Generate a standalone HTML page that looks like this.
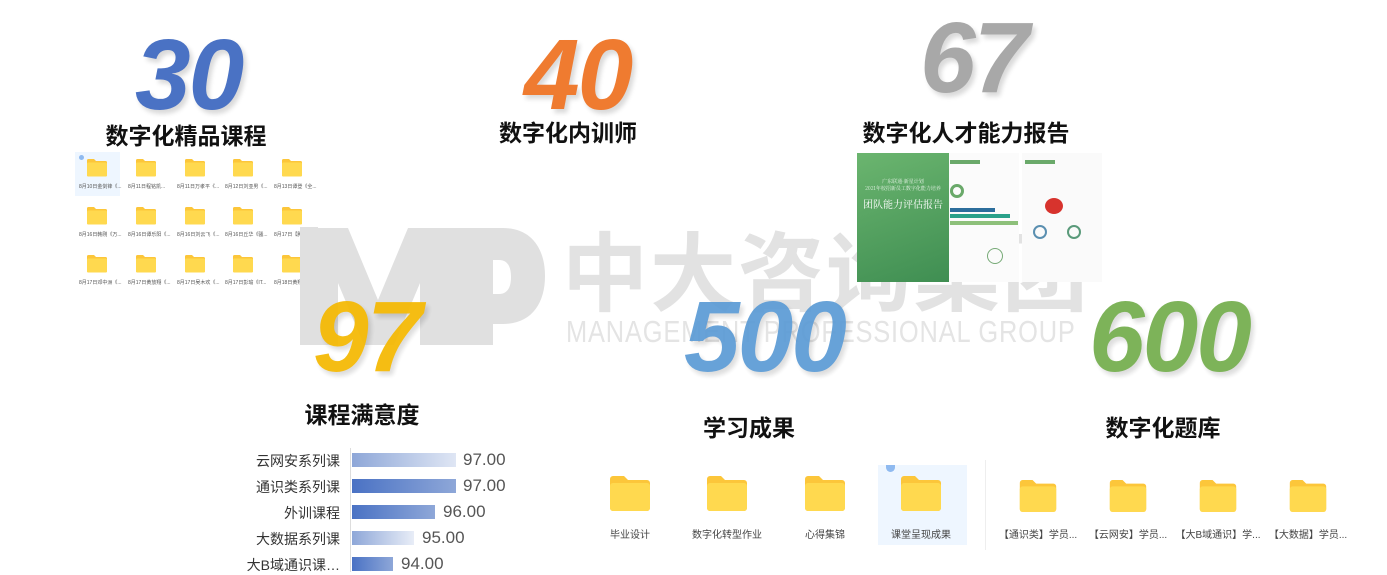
<!DOCTYPE html>
<html><head><meta charset="utf-8"><style>
*{margin:0;padding:0;box-sizing:border-box}
body{width:1387px;height:572px;overflow:hidden;background:#fff;position:relative;font-family:"Liberation Sans","Noto Sans CJK SC",sans-serif}
.a{position:absolute}
.num{position:absolute;font-style:italic;font-weight:bold;font-size:100px;line-height:1;letter-spacing:-2px;text-shadow:3px 4px 5px rgba(0,0,0,.15)}
.t{position:absolute;font-weight:bold;font-size:23px;color:#111;transform:translateX(-50%);white-space:nowrap}
.wm{position:absolute;color:#e2e2e2;white-space:nowrap}
.fs{position:absolute}
.lbl{position:absolute;font-size:10px;color:#444;transform:translateX(-50%);white-space:nowrap}
.tl{position:absolute;font-size:5px;color:#555;white-space:nowrap}
.cl{position:absolute;right:1047px;font-size:14px;color:#333;white-space:nowrap}
.bar{position:absolute;left:352px;height:14px}
.v{position:absolute;font-size:17px;color:#555}
</style></head><body>
<svg width="0" height="0" style="position:absolute"><defs><symbol id="f" viewBox="0 0 44 36"><path d="M2 4a3 3 0 0 1 3-3h11l4 4h19a3 3 0 0 1 3 3v25a3 3 0 0 1-3 3H5a3 3 0 0 1-3-3z" fill="#fcc63a"/><path d="M2 11a3 3 0 0 1 3-3h34a3 3 0 0 1 3 3v22a3 3 0 0 1-3 3H5a3 3 0 0 1-3-3z" fill="#ffd94f"/></symbol></defs></svg>

<!-- watermark -->
<svg class="a" style="left:0;top:0" width="1387" height="572">
<path d="M300 345V228h48l30 72 30-72h50v117h-38v-62l-26 62h-30l-26-62v62z" fill="#e0e0e0"/>
<path d="M455 345V228h48c28 0 42 20 42 48s-14 48-42 48h-10v21z" fill="#e0e0e0"/>
<path d="M493 260v34h6c8 0 12-6 12-17s-4-17-12-17z" fill="#fff"/>
</svg>
<div class="wm" style="left:562px;top:204px;font-size:86px;font-weight:bold;letter-spacing:2px">中大咨询集团</div>
<div class="wm" style="left:566px;top:314px;font-size:31px;letter-spacing:1px;color:#e4e4e4;transform:scaleX(.82);transform-origin:left">MANAGEMENT PROFESSIONAL GROUP</div>

<!-- numbers -->
<div class="num" style="left:135px;top:25px;color:#4a72c4">30</div>
<div class="num" style="left:524px;top:25px;color:#ef7b30">40</div>
<div class="num" style="left:920px;top:8px;color:#a8a8a8">67</div>
<div class="num" style="left:313px;top:287px;color:#f5b800;opacity:.92">97</div>
<div class="num" style="left:684px;top:287px;color:#5b9bd5;opacity:.92">500</div>
<div class="num" style="left:1089px;top:287px;color:#73ad4b;opacity:.92">600</div>

<div class="t" style="left:186px;top:117px">数字化精品课程</div>
<div class="t" style="left:568px;top:114px">数字化内训师</div>
<div class="t" style="left:966px;top:114px">数字化人才能力报告</div>
<div class="t" style="left:362px;top:396px">课程满意度</div>
<div class="t" style="left:749px;top:409px">学习成果</div>
<div class="t" style="left:1163px;top:409px">数字化题库</div>

<!-- folder grid -->
<div class="a" style="left:75px;top:152px;width:45px;height:44px;background:#eef6ff"></div>
<div class="a" style="left:79px;top:155px;width:5px;height:5px;border-radius:50%;background:#8fbaf0"></div>
<div id="grid"></div>
<div class="a" style="left:300px;top:227px;width:18px;height:68px;background:#e0e0e0"></div>

<!-- report -->
<div class="a" style="left:857px;top:153px;width:92px;height:129px;background:linear-gradient(160deg,#6bb56f,#3f8e52)"></div>
<div class="a" style="left:863px;top:178px;width:80px;font-size:5px;color:#e8f5e8;text-align:center;font-family:'Noto Serif CJK SC',serif">广东联通·新星计划<br>2021年校招新员工数字化能力培养</div>
<div class="a" style="left:861px;top:196px;width:84px;font-size:10px;color:#fff;text-align:center;font-family:'Noto Serif CJK SC',serif">团队能力评估报告</div>
<div class="a" style="left:949px;top:153px;width:70px;height:129px;background:#fbfbfb"></div>
<div class="a" style="left:950px;top:160px;width:30px;height:4px;background:#6aa96a"></div>
<div class="a" style="left:950px;top:184px;width:14px;height:14px;border:3px solid #6aa96a;border-radius:50%"></div>
<div class="a" style="left:950px;top:208px;width:45px;height:4px;background:#2c6e9c"></div>
<div class="a" style="left:950px;top:214px;width:60px;height:4px;background:#2aa18a"></div>
<div class="a" style="left:950px;top:221px;width:68px;height:4px;background:#8dc07a"></div>
<div class="a" style="left:987px;top:248px;width:16px;height:16px;border:1px solid #7a7;border-radius:50%"></div>
<div class="a" style="left:1022px;top:153px;width:80px;height:129px;background:#fafafa"></div>
<div class="a" style="left:1025px;top:160px;width:30px;height:4px;background:#6aa96a"></div>
<div class="a" style="left:1045px;top:198px;width:18px;height:16px;border-radius:50%;background:#d7332d"></div>
<div class="a" style="left:1033px;top:225px;width:14px;height:14px;border:2px solid #5a8fb0;border-radius:50%"></div>
<div class="a" style="left:1067px;top:225px;width:14px;height:14px;border:2px solid #5a9a7a;border-radius:50%"></div>

<!-- chart -->
<div class="a" style="left:350px;top:448px;width:1px;height:124px;background:#ddd"></div>
<div class="cl" style="top:451px">云网安系列课</div>
<div class="cl" style="top:477px">通识类系列课</div>
<div class="cl" style="top:503px">外训课程</div>
<div class="cl" style="top:529px">大数据系列课</div>
<div class="cl" style="top:555px">大B域通识课…</div>
<div class="bar" style="top:453px;width:104px;background:linear-gradient(90deg,#8ea7d8,#dfe6f4)"></div>
<div class="bar" style="top:479px;width:104px;background:linear-gradient(90deg,#4a72c4,#8ea7d8)"></div>
<div class="bar" style="top:505px;width:83px;background:linear-gradient(90deg,#4a72c4,#8ea7d8)"></div>
<div class="bar" style="top:531px;width:62px;background:linear-gradient(90deg,#8ea7d8,#e8edf7)"></div>
<div class="bar" style="top:557px;width:41px;background:linear-gradient(90deg,#4a72c4,#8ea7d8)"></div>
<div class="v" style="left:463px;top:450px">97.00</div>
<div class="v" style="left:463px;top:476px">97.00</div>
<div class="v" style="left:443px;top:502px">96.00</div>
<div class="v" style="left:422px;top:528px">95.00</div>
<div class="v" style="left:401px;top:554px">94.00</div>

<!-- learning outputs -->
<div class="a" style="left:878px;top:465px;width:89px;height:80px;background:#eef6ff"></div>
<div class="a" style="left:886px;top:465px;width:9px;height:7px;border-radius:0 0 5px 5px;background:#8fbaf0"></div>
<div class="a" style="left:985px;top:460px;width:1px;height:90px;background:#eee"></div>
<div id="bot"></div>

<script>
var g='',labs=[['8月10日金剑锋《...','8月11日程铭凯...','8月11日万孝平《...','8月12日刘亚男《...','8月13日谭登《全...'],['8月16日韩刚《万...','8月16日谭乐阳《...','8月16日刘云飞《...','8月16日丘华《骚...','8月17日【腾讯会...'],['8月17日邓中洲《...','8月17日黄放翔《...','8月17日吴木欢《...','8月17日彭瑜《IT...','8月18日黄翔《制...']];
var cx=[97,146,195,243,292],iy=[158,206,254];
for(var r=0;r<3;r++)for(var c=0;c<5;c++){g+='<svg class="fs" style="left:'+(cx[c]-11)+'px;top:'+iy[r]+'px" width="22" height="19"><use href="#f"/></svg><div class="tl" style="left:'+(cx[c]-18)+'px;top:'+(iy[r]+25)+'px">'+labs[r][c]+'</div>';}
document.getElementById('grid').outerHTML=g;
var b='',bx=[630,727,825,921,1038,1128,1218,1308],bl=['毕业设计','数字化转型作业','心得集锦','课堂呈现成果','【通识类】学员...','【云网安】学员...','【大B域通识】学...','【大数据】学员...'];
for(var i=0;i<8;i++){var w=i<4?44:40,h=i<4?36:33,y=i<4?475:479;b+='<svg class="fs" style="left:'+(bx[i]-w/2)+'px;top:'+y+'px" width="'+w+'" height="'+h+'"><use href="#f"/></svg><div class="lbl" style="left:'+bx[i]+'px;top:526px">'+bl[i]+'</div>';}
document.getElementById('bot').outerHTML=b;
</script>
</body></html>
